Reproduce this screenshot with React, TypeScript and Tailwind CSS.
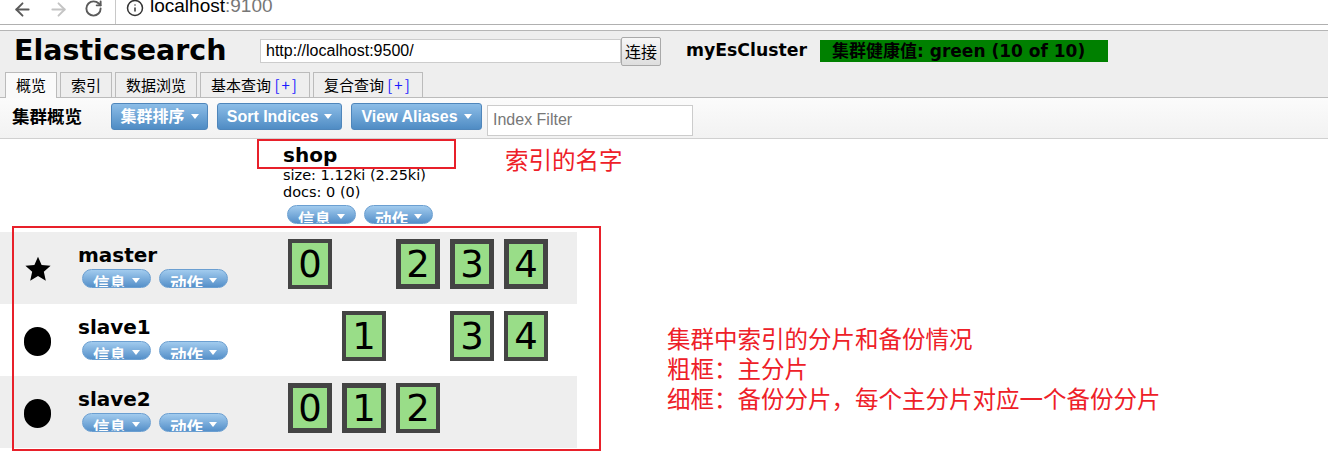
import React from 'react';
import { ArrowLeft, ArrowRight, RotateCw, Info } from 'lucide-react';

type Shard = { n: number; primary: boolean } | null;

interface NodeRow {
  name: string;
  master: boolean;
  shards: Shard[];
}

const nodes: NodeRow[] = [
  {
    name: 'master',
    master: true,
    shards: [
      { n: 0, primary: false },
      null,
      { n: 2, primary: true },
      { n: 3, primary: true },
      { n: 4, primary: true },
    ],
  },
  {
    name: 'slave1',
    master: false,
    shards: [
      null,
      { n: 1, primary: false },
      null,
      { n: 3, primary: false },
      { n: 4, primary: false },
    ],
  },
  {
    name: 'slave2',
    master: false,
    shards: [
      { n: 0, primary: true },
      { n: 1, primary: true },
      { n: 2, primary: false },
      null,
      null,
    ],
  },
];

const Caret = () => (
  <svg width="8" height="5" viewBox="0 0 8 5" className="ml-[6px] shrink-0">
    <path d="M0 0h8L4 5z" fill="#fff" />
  </svg>
);

const ToolButton: React.FC<{ label: string; width: string }> = ({ label, width }) => (
  <button
    type="button"
    className={`${width} h-[27px] flex items-center justify-center rounded-[3px] border border-[#4f86bb] bg-gradient-to-b from-[#8cbde7] to-[#4f8cc4] text-white font-bold text-[16px] font-['Liberation_Sans','Noto_Sans_CJK_SC',sans-serif]`}
  >
    <span>{label}</span>
    <Caret />
  </button>
);

const Pill: React.FC<{ label: string }> = ({ label }) => (
  <button
    type="button"
    className="w-[69px] h-[19px] overflow-hidden flex items-start justify-center rounded-full border border-[#6b9fd1] bg-gradient-to-b from-[#a2cbee] to-[#5590c9] text-white font-bold text-[16.5px] leading-none font-['Noto_Sans_CJK_SC',sans-serif]"
  >
    <span className="pt-[5px]">{label}</span>
    <span className="pt-[8px]">
      <Caret />
    </span>
  </button>
);

const ShardBox: React.FC<{ shard: Shard }> = ({ shard }) => {
  if (!shard) return <div className="w-[44px] h-[50px]" />;
  return (
    <div
      className={`w-[44px] h-[50px] flex items-center justify-center bg-[#99dd88] border-[#444] ${
        shard.primary ? 'border-[5px]' : 'border-[4px]'
      } text-[37px] leading-none text-black font-['DejaVu_Sans',sans-serif]`}
    >
      {shard.n}
    </div>
  );
};

const Star = () => (
  <svg width="28" height="28" viewBox="0 0 24 24">
    <path d="M12 1.5l3.1 7.1 7.7.7-5.8 5.1 1.7 7.6L12 18l-6.7 4 1.7-7.6-5.8-5.1 7.7-.7z" fill="#000" />
  </svg>
);

export default function App() {
  return (
    <div className="relative w-[1328px] h-[469px] overflow-hidden bg-white text-black font-['DejaVu_Sans','Noto_Sans_CJK_SC',sans-serif]">
      {/* browser toolbar */}
      <div className="h-[31px] border-b border-[#b5b5b5] bg-white">
        <div className="h-[25px] flex border-b border-[#b0b0b0]">
          <div className="w-[115px] flex items-start pl-[12px] gap-[15px] -mt-[1px]">
            <ArrowLeft size={21} strokeWidth={2.2} color="#5a5a5a" />
            <ArrowRight size={21} strokeWidth={2.2} color="#c4c4c4" />
            <RotateCw size={19} strokeWidth={2.4} color="#5a5a5a" />
          </div>
          <div className="flex-1 flex items-start border-l border-[#c8c8c8] pl-[10px]">
            <Info size={18} strokeWidth={2} color="#333" className="-mt-[1px]" />
            <div className="ml-[6px] -mt-[6px] text-[19px] leading-[24px] font-['Liberation_Sans',sans-serif]">
              <span className="text-black">localhost</span>
              <span className="text-[#777]">:9100</span>
            </div>
          </div>
        </div>
      </div>

      {/* header */}
      <div className="h-[67px] bg-[#eee] border-b border-[#bbb] pt-[5px]">
        <div className="h-[30px] flex items-center">
          <div className="ml-[14px] w-[246px] text-[28.5px] font-bold leading-none font-['DejaVu_Sans',sans-serif]">
            Elasticsearch
          </div>
          <div className="w-[361px] h-[24px] bg-white border border-[#ccc] pl-[5px] text-[16px] leading-[22px] font-['Liberation_Sans',sans-serif]">
            http://localhost:9500/
          </div>
          <button
            type="button"
            className="w-[40px] h-[29px] border border-[#a9a9a9] rounded-[2px] bg-gradient-to-b from-[#f7f7f7] to-[#dedede] text-[16px] leading-none font-['Noto_Sans_CJK_SC',sans-serif]"
          >
            连接
          </button>
          <div className="ml-[25px] text-[17.3px] font-bold leading-none">myEsCluster</div>
          <div className="ml-[13px] w-[288px] h-[22px] bg-[#008000] pl-[12px] text-[17px] font-bold leading-[22px] text-black">
            集群健康值: green (10 of 10)
          </div>
        </div>
        <div className="mt-[6px] h-[26px] flex gap-[3px] pl-[5px] font-['Noto_Sans_CJK_SC',sans-serif] text-[15px]">
          <div className="h-[26px] px-[10px] border border-[#bbb] border-b-0 bg-[#fafafa] leading-[24px]">概览</div>
          <div className="h-[25px] px-[10px] border border-[#bbb] border-b-0 bg-[#eee] leading-[24px]">索引</div>
          <div className="h-[25px] px-[10px] border border-[#bbb] border-b-0 bg-[#eee] leading-[24px]">数据浏览</div>
          <div className="h-[25px] px-[10px] border border-[#bbb] border-b-0 bg-[#eee] leading-[24px]">
            基本查询 <span className="text-[#1a1aff] tracking-[2px]">[+]</span>
          </div>
          <div className="h-[25px] px-[10px] border border-[#bbb] border-b-0 bg-[#eee] leading-[24px]">
            复合查询 <span className="text-[#1a1aff] tracking-[2px]">[+]</span>
          </div>
        </div>
      </div>

      {/* toolbar */}
      <div className="h-[41px] flex items-start pt-[5px] bg-gradient-to-b from-[#fbfbfb] to-[#f2f2f2] border-b border-[#d0d0d0]">
        <div className="ml-[12px] w-[99px] mt-[3px] text-[17.5px] font-bold leading-[20px] font-['Noto_Sans_CJK_SC',sans-serif]">
          集群概览
        </div>
        <div className="flex gap-[9px]">
          <ToolButton label="集群排序" width="w-[97px]" />
          <ToolButton label="Sort Indices" width="w-[125px]" />
          <ToolButton label="View Aliases" width="w-[131px]" />
        </div>
        <div className="ml-[5px] mt-[2px] w-[206px] h-[31px] bg-white border border-[#ccc] pl-[5px] text-[16px] leading-[28px] text-[#777] font-['Liberation_Sans',sans-serif]">
          Index Filter
        </div>
      </div>

      {/* index header */}
      <div className="pl-[283px] pt-[5px]">
        <div className="text-[20px] font-bold leading-[23px]">shop</div>
        <div className="text-[14.5px] leading-[17px]">size: 1.12ki (2.25ki)</div>
        <div className="text-[14.5px] leading-[17px]">docs: 0 (0)</div>
        <div className="mt-[4px] ml-[4px] flex gap-[8px]">
          <Pill label="信息" />
          <Pill label="动作" />
        </div>
      </div>

      {/* nodes */}
      <div className="mt-[8px] w-[577px]">
        {nodes.map((node, i) => (
          <div key={node.name} className={`h-[72px] flex ${i % 2 === 0 ? 'bg-[#eee]' : 'bg-white'}`}>
            <div className="w-[78px] pl-[24px] pt-[23px]">
              {node.master ? <Star /> : <div className="w-[27px] h-[29px] rounded-full bg-black" />}
            </div>
            <div className="w-[210px] pt-[12px]">
              <div className="text-[20px] font-bold leading-[22px]">{node.name}</div>
              <div className="mt-[3px] ml-[4px] flex gap-[8px]">
                <Pill label="信息" />
                <Pill label="动作" />
              </div>
            </div>
            <div className="pt-[7px] flex gap-[10px]">
              {node.shards.map((s, j) => (
                <ShardBox key={j} shard={s} />
              ))}
            </div>
          </div>
        ))}
      </div>

      {/* annotations */}
      <div className="absolute left-[257px] top-[139px] w-[199px] h-[30px] border-2 border-[#e8202a]" />
      <div className="absolute left-[505px] top-[145px] text-[23.5px] leading-[28px] text-[#ee2028] font-['Noto_Sans_CJK_SC',sans-serif]">
        索引的名字
      </div>
      <div className="absolute left-[12px] top-[226px] w-[589px] h-[225px] border-2 border-[#e8202a]" />
      <div className="absolute left-[667px] top-[323px] text-[23.5px] leading-[30px] text-[#ee2028] font-['Noto_Sans_CJK_SC',sans-serif]">
        <div>集群中索引的分片和备份情况</div>
        <div>粗框：主分片</div>
        <div>细框：备份分片，每个主分片对应一个备份分片</div>
      </div>
    </div>
  );
}
